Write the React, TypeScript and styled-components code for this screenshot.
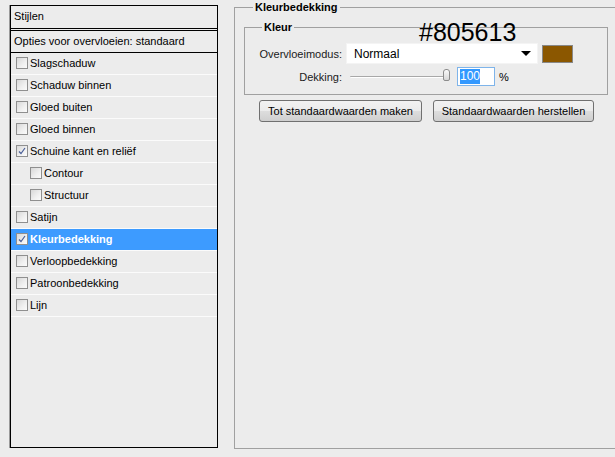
import { FC } from 'react';
import styled, { createGlobalStyle } from 'styled-components';

const GlobalStyle = createGlobalStyle`
  html, body {
    margin: 0;
    padding: 0;
    background: #ececec;
  }
  body {
    font-family: "Liberation Sans", Arial, sans-serif;
    font-size: 11px;
    color: #000;
  }
`;

const Page = styled.div`
  width: 615px;
  height: 457px;
  overflow: hidden;
  display: flex;
  align-items: flex-start;
  gap: 16px;
  padding-left: 10px;
  box-sizing: border-box;
`;

const StylesList = styled.div`
  margin-top: 5px;
  width: 208px;
  height: 443px;
  flex-shrink: 0;
  box-sizing: border-box;
  border: 1px solid #000;
  box-shadow: -1px 0 0 #9a9a9a;
  display: flex;
  flex-direction: column;
`;

const HeaderRow = styled.div<{ $double?: boolean }>`
  height: ${({ $double }) => ($double ? 25 : 22)}px;
  box-sizing: border-box;
  padding-left: 3px;
  display: flex;
  align-items: center;
  border-bottom: ${({ $double }) => ($double ? '3px double #000' : '1px solid #000')};
  padding-bottom: ${({ $double }) => ($double ? 2 : 1)}px;
`;

const StyleRow = styled.div<{ $indent?: boolean; $active?: boolean }>`
  height: 22px;
  box-sizing: border-box;
  border-bottom: 1px solid #fbfbfb;
  display: flex;
  align-items: center;
  gap: 2px;
  padding-left: ${({ $indent }) => ($indent ? 19 : 5)}px;
  padding-bottom: 1px;
  background: ${({ $active }) => ($active ? '#3d9bff' : 'transparent')};
  color: ${({ $active }) => ($active ? '#fff' : '#000')};
  font-weight: ${({ $active }) => ($active ? 700 : 400)};
`;

const Box = styled.span`
  width: 12px;
  height: 12px;
  box-sizing: border-box;
  border: 1px solid #8f8f8f;
  background: linear-gradient(135deg, #d8d8d8 0%, #f0f0f0 60%, #fbfbfb 100%);
  display: flex;
  align-items: center;
  justify-content: center;
  flex-shrink: 0;
`;

const Panel = styled.fieldset`
  position: relative;
  margin: 0;
  width: 420px;
  height: 449px;
  box-sizing: border-box;
  flex-shrink: 0;
  padding: 6px 0 0 9px;
  border: 1px solid #a0a0a0;
`;

const Legend = styled.legend<{ $offset: number }>`
  font-weight: 700;
  line-height: 14px;
  padding: 0 2px;
  margin-left: ${({ $offset }) => $offset}px;
`;

const Group = styled.fieldset`
  margin: 0;
  width: 364px;
  box-sizing: border-box;
  padding: 0 0 8px 0;
  border: 1px solid #a0a0a0;
`;

const FormGrid = styled.div`
  margin-top: 9px;
  display: grid;
  grid-template-columns: 97px 1fr;
  column-gap: 4px;
  row-gap: 3px;
  align-items: center;
`;

const Label = styled.span`
  text-align: right;
  color: #1a1a1a;
`;

const Controls = styled.div`
  display: flex;
  align-items: center;
  gap: 4px;
`;

const Select = styled.div`
  width: 192px;
  height: 21px;
  box-sizing: border-box;
  background: #fff;
  border: 1px solid #f4f4f4;
  display: flex;
  align-items: center;
  justify-content: space-between;
  padding: 0 6px 0 7px;
  font-size: 12px;
`;

const Arrow = styled.span`
  width: 0;
  height: 0;
  border-left: 5px solid transparent;
  border-right: 5px solid transparent;
  border-top: 5px solid #000;
`;

const Swatch = styled.span<{ $color: string }>`
  width: 31px;
  height: 18px;
  box-sizing: border-box;
  border: 1px solid #888;
  background: ${({ $color }) => $color};
`;

const Slider = styled.div`
  margin-left: 4px;
  width: 100px;
  height: 19px;
  display: flex;
  align-items: center;
  position: relative;
`;

const Track = styled.span`
  flex: 1;
  height: 1px;
  background: #a8a8a8;
  border-bottom: 1px solid #fff;
  border-radius: 1px;
`;

const Thumb = styled.span`
  position: absolute;
  right: 0;
  top: 2px;
  width: 7px;
  height: 12px;
  box-sizing: border-box;
  border: 1px solid #8c8c8c;
  border-radius: 3px 3px 2px 2px;
  background: linear-gradient(#fafafa, #d6d6d6);
`;

const NumberBox = styled.span`
  margin-left: 3px;
  width: 38px;
  height: 19px;
  box-sizing: border-box;
  border: 1px solid #7eb4ea;
  background: #fff;
  display: flex;
  align-items: center;
  padding-left: 2px;
  font-size: 12px;
`;

const Selected = styled.span`
  background: #3399ff;
  color: #fff;
  line-height: 15px;
`;

const ButtonRow = styled.div`
  margin-top: 5px;
  padding-left: 15px;
  display: flex;
  gap: 11px;
`;

const Button = styled.button<{ $width: number }>`
  width: ${({ $width }) => $width}px;
  height: 22px;
  box-sizing: border-box;
  border: 1px solid #707070;
  border-radius: 3px;
  background: linear-gradient(#f2f2f2 0%, #ebebeb 50%, #dddddd 51%, #cfcfcf 100%);
  font-family: inherit;
  font-size: 11px;
  color: #000;
  padding: 0;
`;

const HexLabel = styled.div`
  position: absolute;
  left: 184px;
  top: 5px;
  font-family: "Liberation Sans", Arial, sans-serif;
  font-size: 25px;
  line-height: 26px;
  color: #000;
`;

const CheckBox: FC<{ checked?: boolean }> = ({ checked }) => (
  <Box>
    {checked && (
      <svg width="8" height="8" viewBox="0 0 8 8">
        <path d="M1 4.5 L3 6.5 L7 1" fill="none" stroke="#4a5f98" strokeWidth="1.2" />
      </svg>
    )}
  </Box>
);

interface IStyleItem {
  label: string;
  checked?: boolean;
  indent?: boolean;
  active?: boolean;
}

const items: IStyleItem[] = [
  { label: 'Slagschaduw' },
  { label: 'Schaduw binnen' },
  { label: 'Gloed buiten' },
  { label: 'Gloed binnen' },
  { label: 'Schuine kant en reliëf', checked: true },
  { label: 'Contour', indent: true },
  { label: 'Structuur', indent: true },
  { label: 'Satijn' },
  { label: 'Kleurbedekking', checked: true, active: true },
  { label: 'Verloopbedekking' },
  { label: 'Patroonbedekking' },
  { label: 'Lijn' },
];

export default function App() {
  return (
    <>
      <GlobalStyle />
      <Page>
        <StylesList>
          <HeaderRow $double>Stijlen</HeaderRow>
          <HeaderRow>Opties voor overvloeien: standaard</HeaderRow>
          {items.map((item) => (
            <StyleRow key={item.label} $indent={item.indent} $active={item.active}>
              <CheckBox checked={item.checked} />
              {item.label}
            </StyleRow>
          ))}
        </StylesList>

        <Panel>
          <Legend $offset={9}>Kleurbedekking</Legend>
          <Group>
            <Legend $offset={17}>Kleur</Legend>
            <FormGrid>
              <Label>Overvloeimodus:</Label>
              <Controls>
                <Select>
                  Normaal
                  <Arrow />
                </Select>
                <Swatch $color="#8b5700" />
              </Controls>
              <Label>Dekking:</Label>
              <Controls>
                <Slider>
                  <Track />
                  <Thumb />
                </Slider>
                <NumberBox>
                  <Selected>100</Selected>
                </NumberBox>
                <span>%</span>
              </Controls>
            </FormGrid>
          </Group>
          <ButtonRow>
            <Button $width={163}>Tot standaardwaarden maken</Button>
            <Button $width={161}>Standaardwaarden herstellen</Button>
          </ButtonRow>
          <HexLabel>#805613</HexLabel>
        </Panel>
      </Page>
    </>
  );
}
